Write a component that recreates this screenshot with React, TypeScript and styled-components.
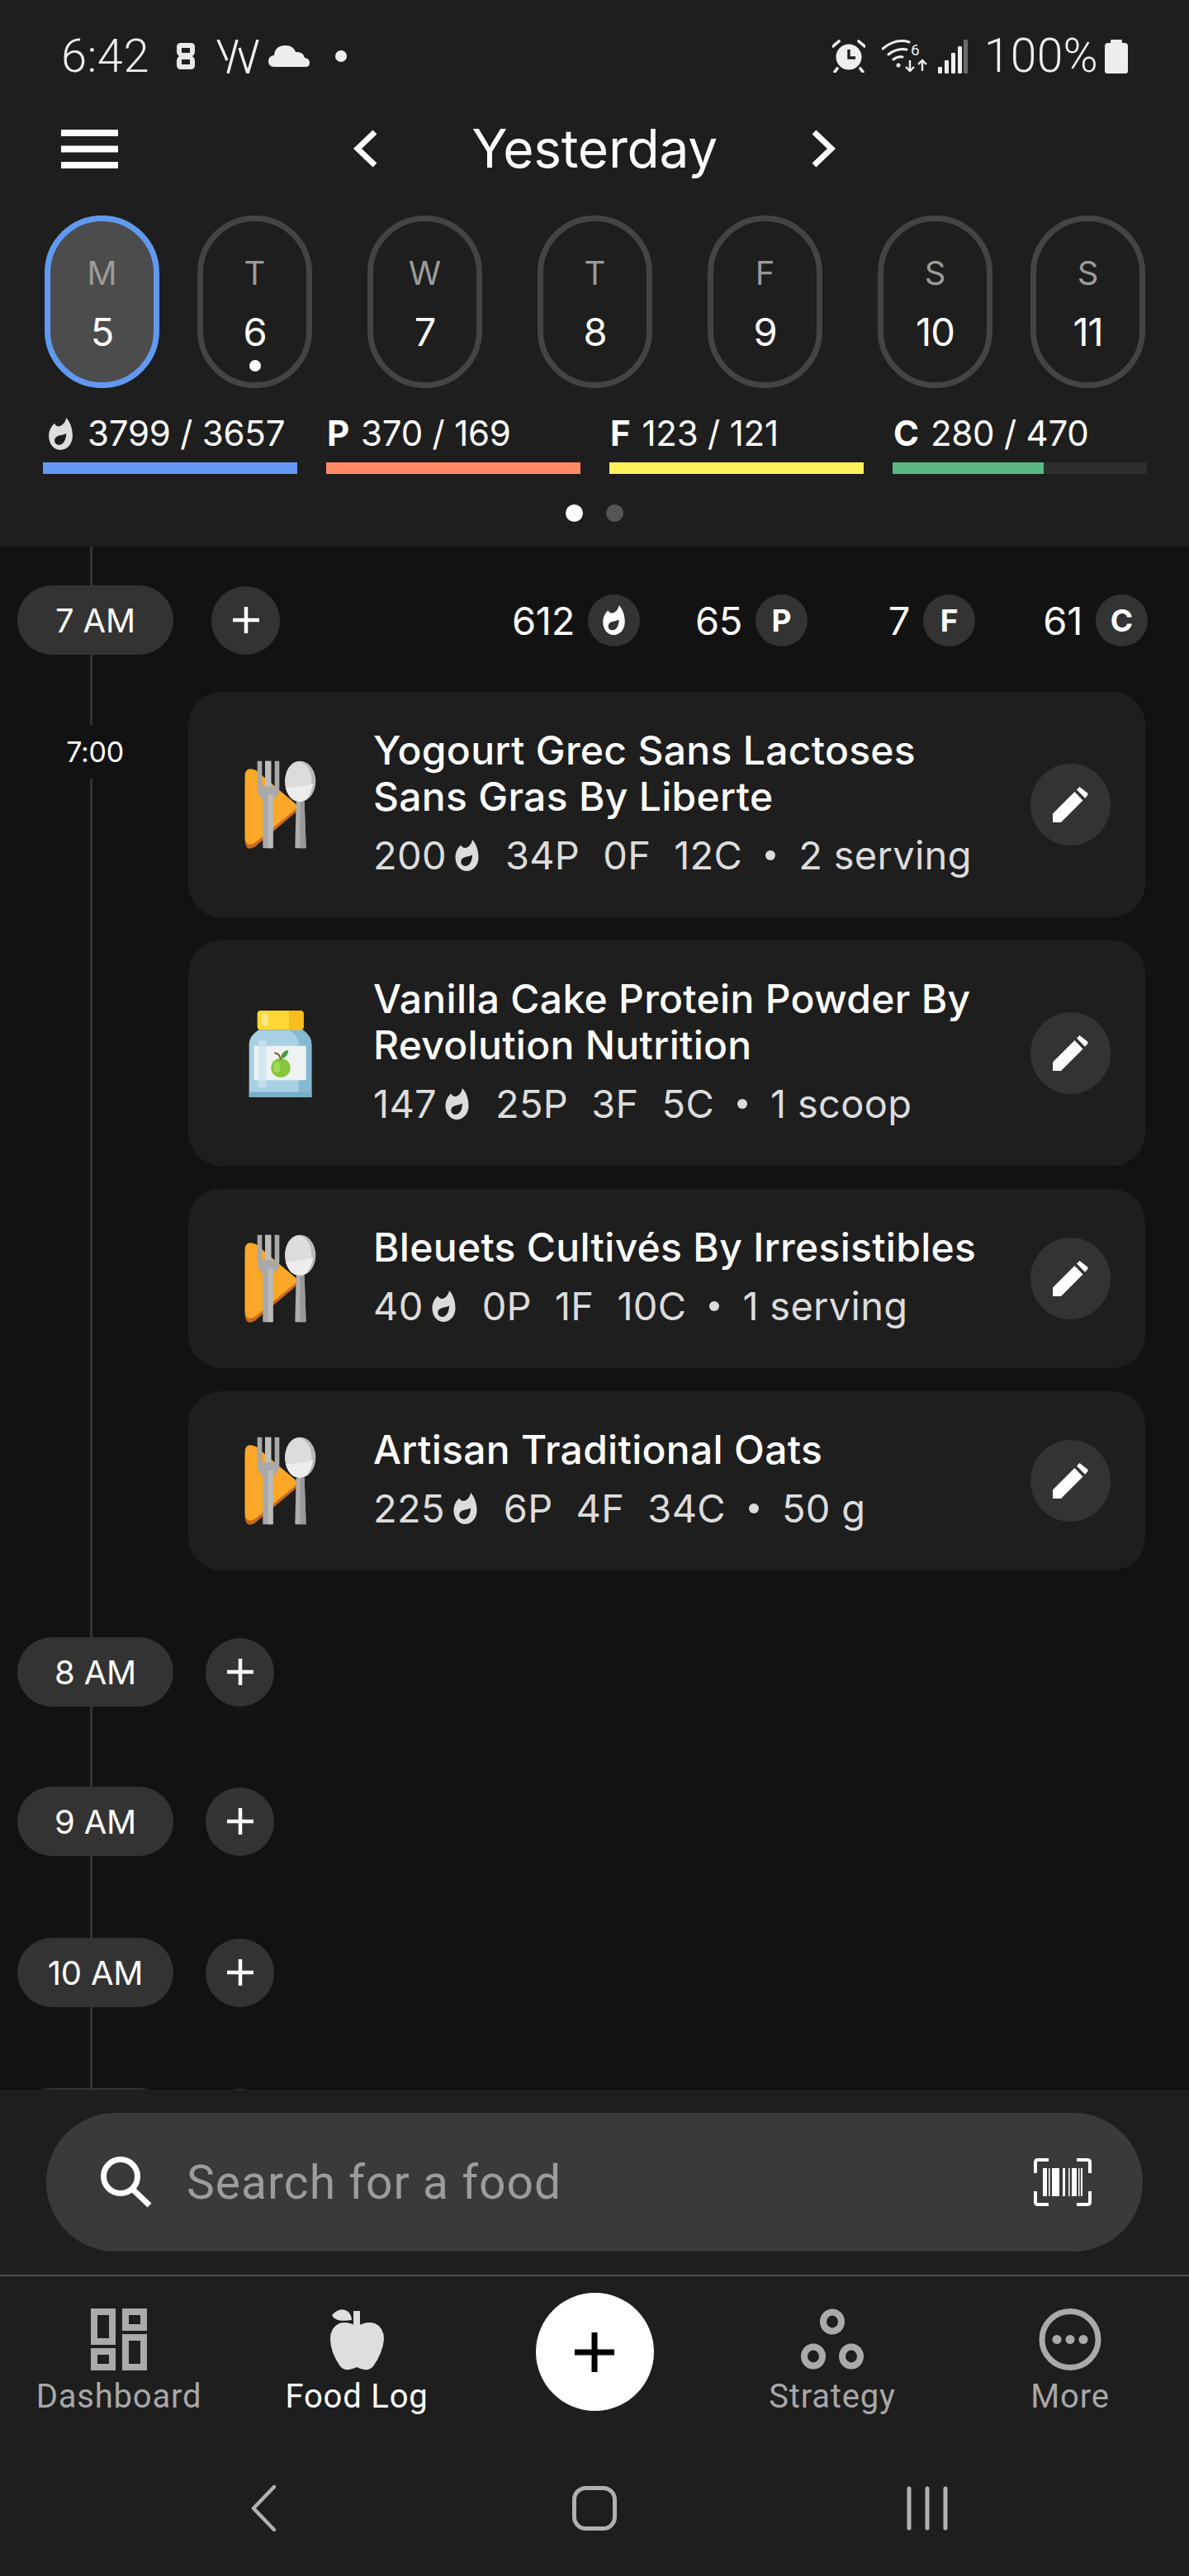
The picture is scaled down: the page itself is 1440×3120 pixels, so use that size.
import React from "react";
import styled, { createGlobalStyle } from "styled-components";

const Global = createGlobalStyle`
  html, body { margin: 0; padding: 0; background: #121212; }
  * { box-sizing: border-box; }
`;

const SANS = `"Inter", "Noto Sans", "Liberation Sans", sans-serif`;
const NAVFONT = `"Roboto", "Liberation Sans", sans-serif`;

const Page = styled.div`
  width: 1440px; height: 3120px; overflow: hidden; display: flex; flex-direction: column;
  background: #121212; color: #fff; font-family: ${SANS};
`;
const Header = styled.header`
  height: 662px; flex: none; background: #1e1e1e; display: flex; flex-direction: column;
`;
const StatusBar = styled.div`
  height: 136px; flex: none; display: flex; align-items: center; padding: 0 74px 0 74px; color: #eee;
`;
const StatusTime = styled.span`
  font: 300 56px/60px ${NAVFONT}; margin-right: 33px; letter-spacing: 0.5px;
`;
const StatusGlyph = styled.svg<{ $gap?: number }>`
  flex: none; display: block; margin-right: ${(p) => p.$gap ?? 0}px;
`;
const StatusSpacer = styled.div`flex: 1;`;
const StatusPercent = styled.span`
  font: 300 57px/60px ${NAVFONT}; margin: 0 8px 0 20px; letter-spacing: 0.3px;
`;
const NavRow = styled.div`
  height: 88px; flex: none; display: grid; grid-template-columns: 428px 584px 1fr; align-items: center;
`;
const MenuButton = styled.svg`display: block; margin-left: 74px;`;
const DateSwitcher = styled.div`
  display: flex; align-items: center; justify-content: space-between;
`;
const Chevron = styled.svg`display: block; flex: none;`;
const DateTitle = styled.span`
  font-size: 64px; line-height: 80px; font-weight: 400; letter-spacing: -0.3px;
`;
const DayRow = styled.div`
  margin-top: 37px; padding-left: 54px; display: flex; gap: 67px;
`;
const DayPill = styled.div<{ $active?: boolean }>`
  width: 139px; height: 209px; flex: none; border-radius: 70px; display: flex; flex-direction: column;
  align-items: center; padding-top: 41px;
  border: 7px solid ${(p) => (p.$active ? "#6199f0" : "#444444")};
  background: ${(p) => (p.$active ? "#4c4c4c" : "transparent")};
  &:first-child { margin-right: -21px; }
  &:last-child { margin-left: -21px; }
`;
const DayLetter = styled.span`
  font-size: 40px; line-height: 44px; color: #9b9b9b; font-weight: 400;
`;
const DayNumber = styled.span`
  margin-top: 24px; font-size: 47px; line-height: 50px; font-weight: 400; letter-spacing: -1px;
`;
const DayDot = styled.span`
  margin-top: 9px; width: 14px; height: 14px; border-radius: 50%; background: #fff; flex: none;
`;
const StatRow = styled.div`
  margin-top: 31px; padding-left: 52px; display: flex; gap: 35px;
`;
const Stat = styled.div`width: 308px; flex: none;`;
const StatText = styled.div`
  height: 48px; display: flex; align-items: center; font-size: 42px; line-height: 48px; letter-spacing: -0.2px;
  color: #fff; padding-left: 1px; white-space: nowrap;
`;
const StatKey = styled.b<{ $space: number }>`
  font-weight: 700; margin-right: ${(p) => p.$space}px;
`;
const StatFlame = styled.span`flex: none; display: block; margin: 0 18px 0 6px;`;
const Track = styled.div`
  margin-top: 11px; height: 14px; background: #2e2e2e;
`;
const Fill = styled.div<{ $color: string; $width: number }>`
  height: 100%; width: ${(p) => p.$width}%; background: ${(p) => p.$color};
`;
const Pager = styled.div`
  margin-top: 37px; display: flex; justify-content: center; gap: 28px;
`;
const PagerDot = styled.span<{ $on?: boolean }>`
  width: 21px; height: 21px; border-radius: 50%; background: ${(p) => (p.$on ? "#fff" : "#555")};
`;

const Timeline = styled.main`
  position: relative; flex: 1; min-height: 0; overflow: hidden; padding-top: 47px;
`;
const TimelineRail = styled.div`
  position: absolute; left: 109px; top: 0; bottom: 0; width: 3px; background: #333;
`;
const HourRow = styled.div<{ $after?: number }>`
  position: relative; display: flex; align-items: center; height: 84px; padding-left: 21px;
  margin-top: ${(p) => p.$after ?? 0}px;
`;
const HourPill = styled.div`
  width: 189px; height: 84px; border-radius: 42px; background: #333; display: flex; align-items: center;
  justify-content: center; font-size: 40px; letter-spacing: -0.2px;
`;
const AddHour = styled.div<{ $gap: number }>`
  width: 83px; height: 83px; border-radius: 50%; background: #333; display: flex; align-items: center;
  justify-content: center; margin-left: ${(p) => p.$gap}px;
`;
const MacroTotals = styled.div`
  margin-left: auto; padding-right: 50px; display: flex;
`;
const MacroTotal = styled.div`
  width: 203px; display: flex; align-items: center; justify-content: flex-end; gap: 16px;
  font-size: 47px; letter-spacing: -0.3px;
  &:last-child { width: 209px; }
`;
const MacroBadge = styled.span`
  width: 63px; height: 63px; border-radius: 50%; background: #333; display: flex; align-items: center;
  justify-content: center; font-size: 37px; font-weight: 700; letter-spacing: 0;
`;
const EntryGroup = styled.section`
  position: relative; display: flex; margin-top: 45px;
`;
const TimeColumn = styled.div`width: 228px; flex: none;`;
const TimeLabel = styled.div`
  margin: 40px 0 0 65px; width: 100px; height: 65px; background: #121212; display: flex;
  align-items: center; justify-content: center; font-size: 34px; letter-spacing: -0.3px;
`;
const CardStack = styled.div`
  width: 1159px; display: flex; flex-direction: column; gap: 28px;
`;
const Card = styled.article<{ $tall?: boolean }>`
  height: ${(p) => (p.$tall ? 273 : 217)}px; border-radius: 40px; background: #1e1e1e;
  display: flex; align-items: center; padding: 0 42px 0 32px;
`;
const FoodIcon = styled.svg`
  flex: none; display: block; margin: 8px 32px 0 0;
`;
const CardText = styled.div`flex: 1; min-width: 0; padding-bottom: 3px;`;
const FoodName = styled.div`
  font-size: 48px; line-height: 56px; font-weight: 500; letter-spacing: 0.3px; color: #fff; white-space: nowrap;
`;
const FoodMeta = styled.div`
  margin-top: 14px; display: flex; align-items: center; gap: 28px; font-size: 47px; line-height: 58px;
  color: #dcdcdc; letter-spacing: 0.3px; white-space: nowrap;
`;
const MetaCal = styled.span`display: flex; align-items: center; gap: 10px; margin-right: 4px;`;
const MetaDot = styled.span`
  width: 12px; height: 12px; border-radius: 50%; background: #dcdcdc;
`;
const EditButton = styled.button`
  flex: none; width: 97px; height: 99px; border-radius: 50%; border: 0; padding: 0; background: #333;
  display: flex; align-items: center; justify-content: center;
`;

const Footer = styled.footer`
  height: 589px; flex: none; background: #1e1e1e; display: flex; flex-direction: column;
  position: relative;
`;
const SearchBar = styled.div`
  margin: 28px 56px 0 56px; height: 168px; border-radius: 84px; background: #3a3a3a; display: flex;
  align-items: center; padding: 0 62px 0 66px;
`;
const SearchGlyph = styled.svg`flex: none; display: block;`;
const SearchPlaceholder = styled.span`
  flex: 1; margin-left: 42px; font-family: ${NAVFONT}; font-size: 57px; color: #9c9c9c; letter-spacing: 1px;
`;
const Divider = styled.div`margin-top: 28px; height: 2px; background: #4e4e4e; flex: none;`;
const TabBar = styled.nav`
  display: grid; grid-template-columns: repeat(5, 288px); height: 197px; flex: none;
`;
const Tab = styled.div`
  display: flex; flex-direction: column; align-items: center; padding-top: 39px;
`;
const TabGlyph = styled.svg`display: block; flex: none;`;
const TabLabel = styled.span<{ $active?: boolean }>`
  margin-top: 10px; font: 400 40px/44px ${NAVFONT}; letter-spacing: 0.8px;
  color: ${(p) => (p.$active ? "#fff" : "#a8a8a8")};
`;
const FabCell = styled.div`display: flex; justify-content: center; padding-top: 20px;`;
const Fab = styled.div`
  width: 143px; height: 143px; border-radius: 50%; background: #fff; display: flex; align-items: center;
  justify-content: center;
`;
const SystemNav = styled.div`
  margin-top: auto; height: 164px; flex: none; display: flex; align-items: center; padding-left: 304px;
`;
const SystemGlyph = styled.svg<{ $left?: number }>`
  display: block; flex: none; margin-left: ${(p) => p.$left ?? 0}px;
`;
const FlameGlyph = styled.svg`display: block; flex: none;`;
const PlusGlyph = styled.svg`display: block; flex: none;`;
const PencilGlyph = styled.svg`display: block; flex: none;`;

const Flame = ({ w, h, c }: { w: number; h: number; c: string }) => (
  <FlameGlyph width={w} height={h} viewBox="0 0 28 38">
    <path
      fillRule="evenodd"
      fill={c}
      d="M20.5 0C26 6 28 14 28 21.5C28 31 21.5 38 13.7 38C6 38 0 31 0 21.5C0 15 3 10 6.5 6.5C8 9 10 10.5 12.5 10C16.5 9 19.8 5 20.5 0ZM20.5 18.4C16 21 10 20 7.5 24C5.5 28 8 32 12 32C17 32 20.5 26 20.5 18.4Z"
    />
  </FlameGlyph>
);

const Plus = ({ size, stroke, color }: { size: number; stroke: number; color: string }) => (
  <PlusGlyph width={size} height={size} viewBox={`0 0 ${size} ${size}`}>
    <path d={`M${size / 2} 0V${size}M0 ${size / 2}H${size}`} stroke={color} strokeWidth={stroke} fill="none" />
  </PlusGlyph>
);

const Pencil = () => (
  <PencilGlyph width="43" height="43" viewBox="0 0 43 43">
    <path fill="#fff" d="M0 43V32.5L26.5 6L36.5 16.5L10 43Z" />
    <path fill="#fff" d="M29 3.5L32.5 0L42 7.5Q43 9 42 10.5L39 13.8Z" />
  </PencilGlyph>
);

const PlateIcon = () => (
  <FoodIcon width="160" height="160" viewBox="0 0 480 480">
    <path d="M110 130Q112 88 150 104L292 222Q306 238 288 252L146 372Q112 392 110 350Z" fill="#c9691d" transform="translate(0 8)" />
    <path d="M110 120Q112 86 150 102L292 222Q306 234 288 248L146 366Q112 382 110 346Z" fill="#fba727" />
    <path d="M155 68H172V160H183V68H205V160H218V68H235V165Q235 195 212 208V385H175V208Q155 195 155 165Z" fill="#a9a9a9" />
    <path d="M183 68H205V160H183ZM194 190H212V385H194Z" fill="#bdbdbd" />
    <path d="M296 215H326L332 385H292Z" fill="#adadad" />
    <path d="M311 215H326L332 385H311Z" fill="#989898" />
    <ellipse cx="311" cy="142" rx="56" ry="74" fill="#b9b9b9" />
    <ellipse cx="304" cy="142" rx="48" ry="72" fill="#dcdcdc" />
    <path d="M258 165Q310 165 358 150Q345 216 311 216Q270 216 258 165Z" fill="#ededed" />
  </FoodIcon>
);

const JarIcon = () => (
  <FoodIcon width="160" height="160" viewBox="0 0 480 480">
    <path d="M125 386V195Q125 165 160 142H320Q352 165 352 195V386Z" fill="#a8d0e3" />
    <path d="M270 142H320Q352 165 352 195V386H305V195Q305 165 270 142Z" fill="#85b9d2" />
    <rect x="125" y="368" width="227" height="18" fill="#79afc9" />
    <path d="M143 200H332V325H143Z" fill="#eef2f3" />
    <rect x="159" y="180" width="28" height="172" fill="#c8e3ee" opacity=".75" />
    <rect x="155" y="72" width="168" height="70" rx="12" fill="#fdd835" />
    <path d="M270 72H311Q323 72 323 84V130Q323 142 311 142H270Z" fill="#f9bd1d" />
    <rect x="170" y="84" width="24" height="42" fill="#ffe985" />
    <ellipse cx="240" cy="280" rx="35" ry="35" fill="#85c63c" />
    <ellipse cx="226" cy="278" rx="13" ry="20" fill="#a3d95a" />
    <path d="M217 226Q236 228 240 250" stroke="#8a5a2b" strokeWidth="6" fill="none" />
    <path d="M241 246Q240 220 268 216Q266 242 241 246Z" fill="#3f9a37" />
  </FoodIcon>
);

const days = [
  ["M", "5"], ["T", "6"], ["W", "7"], ["T", "8"], ["F", "9"], ["S", "10"], ["S", "11"],
];

const foods = [
  { name: ["Yogourt Grec Sans Lactoses", "Sans Gras By Liberte"], cal: "200", macros: ["34P", "0F", "12C"], qty: "2 serving", jar: false },
  { name: ["Vanilla Cake Protein Powder By", "Revolution Nutrition"], cal: "147", macros: ["25P", "3F", "5C"], qty: "1 scoop", jar: true },
  { name: ["Bleuets Cultivés By Irresistibles"], cal: "40", macros: ["0P", "1F", "10C"], qty: "1 serving", jar: false },
  { name: ["Artisan Traditional Oats"], cal: "225", macros: ["6P", "4F", "34C"], qty: "50 g", jar: false },
];

const laterHours: Array<[string, number]> = [["8 AM", 81], ["9 AM", 97], ["10 AM", 99], ["", 98]];

export default function App() {
  return (
    <Page>
      <Global />
      <Header>
        <StatusBar>
          <StatusTime>6:42</StatusTime>
          <StatusGlyph $gap={26} width="22" height="32" viewBox="0 0 22 32">
            <path fillRule="evenodd" fill="#e8e8e8" d="M5 0H17Q22 0 22 5V11Q22 14 19 16Q22 18 22 21V27Q22 32 17 32H5Q0 32 0 27V21Q0 18 3 16Q0 14 0 11V5Q0 0 5 0ZM6 6V12H16V6ZM6 20V26H16V20Z" />
          </StatusGlyph>
          <StatusGlyph $gap={11} width="52" height="41" viewBox="0 0 52 41" fill="none" stroke="#eee" strokeWidth="3.4">
            <path d="M2 0L13 25M25 0L14 41M28 10L38 41L50 0" />
          </StatusGlyph>
          <StatusGlyph $gap={31} width="50" height="26" viewBox="0 0 50 26">
            <path fill="#eee" d="M7 26Q0 26 0 19Q0 13 7 12Q8 0 21 0Q30 0 33 8Q42 7 44 15Q50 16 50 21Q50 26 45 26Z" />
          </StatusGlyph>
          <StatusGlyph width="14" height="14" viewBox="0 0 14 14">
            <circle cx="7" cy="7" r="7" fill="#eee" />
          </StatusGlyph>
          <StatusSpacer />
          <StatusGlyph $gap={20} width="40" height="40" viewBox="0 0 40 40" fill="none">
            <circle cx="20" cy="21" r="15.5" fill="#eee" />
            <path d="M20 12V22H28" stroke="#1e1e1e" strokeWidth="3.4" />
            <path d="M1 8L8 2M39 8L32 2M6 35L3 39M34 35L37 39" stroke="#eee" strokeWidth="3.6" strokeLinecap="round" />
          </StatusGlyph>
          <StatusGlyph $gap={13} width="55" height="40" viewBox="0 0 55 40" fill="none" stroke="#eee">
            <path d="M1 11Q17 -2 33 3M8 18Q18 10 30 12M14 24Q19 20 25 21" strokeWidth="3" strokeLinecap="round" />
            <circle cx="20" cy="31" r="2.5" fill="#eee" stroke="none" />
            <path d="M34 25V38M29 33L34 38L39 33M49 38V25M44 30L49 25L54 30" strokeWidth="2.4" />
            <text x="35" y="19" fill="#eee" stroke="none" fontSize="19" fontFamily="Roboto, sans-serif">6</text>
          </StatusGlyph>
          <StatusGlyph width="36" height="41" viewBox="0 0 36 41">
            <rect x="0" y="33" width="5" height="8" rx="1" fill="#eee" />
            <rect x="8" y="25" width="5" height="16" rx="1" fill="#eee" />
            <rect x="16" y="16" width="5" height="25" rx="1" fill="#eee" />
            <rect x="24" y="8" width="5" height="33" rx="1" fill="#eee" />
            <rect x="31" y="0" width="5" height="41" rx="1" fill="#6a6a6a" />
          </StatusGlyph>
          <StatusPercent>100%</StatusPercent>
          <StatusGlyph width="28" height="41" viewBox="0 0 28 41">
            <path fill="#eee" d="M8 0H20Q21 0 21 2V4H24Q28 4 28 8V38Q28 41 25 41H3Q0 41 0 38V8Q0 4 4 4H7V2Q7 0 8 0Z" />
          </StatusGlyph>
        </StatusBar>
        <NavRow>
          <MenuButton width="69" height="47" viewBox="0 0 69 47">
            <rect width="69" height="8" y="0" fill="#fff" />
            <rect width="69" height="8" y="19.5" fill="#fff" />
            <rect width="69" height="8" y="39" fill="#fff" />
          </MenuButton>
          <DateSwitcher>
            <Chevron width="29" height="46" viewBox="0 0 29 46" fill="none"><path d="M26 3L5 23L26 43" stroke="#fff" strokeWidth="7" /></Chevron>
            <DateTitle>Yesterday</DateTitle>
            <Chevron width="29" height="46" viewBox="0 0 29 46" fill="none"><path d="M3 3L24 23L3 43" stroke="#fff" strokeWidth="7" /></Chevron>
          </DateSwitcher>
        </NavRow>
        <DayRow>
          {days.map(([letter, number], i) => (
            <DayPill key={i} $active={i === 0}>
              <DayLetter>{letter}</DayLetter>
              <DayNumber>{number}</DayNumber>
              {i === 1 && <DayDot />}
            </DayPill>
          ))}
        </DayRow>
        <StatRow>
          <Stat>
            <StatText>
              <StatFlame><Flame w={29} h={39} c="#dedede" /></StatFlame>
              3799 / 3657
            </StatText>
            <Track><Fill $color="#6699f3" $width={100} /></Track>
          </Stat>
          <Stat>
            <StatText><StatKey $space={14}>P</StatKey>370 / 169</StatText>
            <Track><Fill $color="#ff8a65" $width={100} /></Track>
          </Stat>
          <Stat>
            <StatText><StatKey $space={14}>F</StatKey>123 / 121</StatText>
            <Track><Fill $color="#fff05c" $width={100} /></Track>
          </Stat>
          <Stat>
            <StatText><StatKey $space={14}>C</StatKey>280 / 470</StatText>
            <Track><Fill $color="#5bb884" $width={59.5} /></Track>
          </Stat>
        </StatRow>
        <Pager>
          <PagerDot $on />
          <PagerDot />
        </Pager>
      </Header>

      <Timeline>
        <TimelineRail />
        <HourRow>
          <HourPill>7 AM</HourPill>
          <AddHour $gap={46}><Plus size={32} stroke={4.5} color="#fff" /></AddHour>
          <MacroTotals>
            <MacroTotal>612<MacroBadge><Flame w={27} h={36} c="#fff" /></MacroBadge></MacroTotal>
            <MacroTotal>65<MacroBadge>P</MacroBadge></MacroTotal>
            <MacroTotal>7<MacroBadge>F</MacroBadge></MacroTotal>
            <MacroTotal>61<MacroBadge>C</MacroBadge></MacroTotal>
          </MacroTotals>
        </HourRow>
        <EntryGroup>
          <TimeColumn><TimeLabel>7:00</TimeLabel></TimeColumn>
          <CardStack>
            {foods.map((f) => (
              <Card key={f.name[0]} $tall={f.name.length > 1}>
                {f.jar ? <JarIcon /> : <PlateIcon />}
                <CardText>
                  {f.name.map((line) => <FoodName key={line}>{line}</FoodName>)}
                  <FoodMeta>
                    <MetaCal>{f.cal}<Flame w={29} h={38} c="#dcdcdc" /></MetaCal>
                    {f.macros.map((m) => <span key={m}>{m}</span>)}
                    <MetaDot />
                    <span>{f.qty}</span>
                  </FoodMeta>
                </CardText>
                <EditButton aria-label="Edit"><Pencil /></EditButton>
              </Card>
            ))}
          </CardStack>
        </EntryGroup>
        {laterHours.map(([label, after]) => (
          <HourRow key={after + label} $after={after}>
            <HourPill>{label}</HourPill>
            <AddHour $gap={39}><Plus size={32} stroke={4.5} color="#fff" /></AddHour>
          </HourRow>
        ))}
      </Timeline>

      <Footer>
        <SearchBar>
          <SearchGlyph width="62" height="62" viewBox="0 0 62 62" fill="none" stroke="#fff">
            <circle cx="24" cy="24" r="20.5" strokeWidth="7" />
            <path d="M38 39L59 59" strokeWidth="7" />
          </SearchGlyph>
          <SearchPlaceholder>Search for a food</SearchPlaceholder>
          <SearchGlyph width="70" height="58" viewBox="0 0 70 58" fill="none" stroke="#fff" strokeWidth="4">
            <path d="M18 2H5Q2 2 2 5V18M52 2H65Q68 2 68 5V18M18 56H5Q2 56 2 53V40M52 56H65Q68 56 68 53V40" />
            <path fill="#fff" stroke="none" d="M11 12H16V46H11ZM18 12H19.5V46H18ZM22 12H31V46H22ZM35 12H38V46H35ZM42 12H43.5V46H42ZM46 12H52V46H46ZM54 12H55.5V46H54ZM57 12H59V46H57Z" />
          </SearchGlyph>
        </SearchBar>
        <Divider />
        <TabBar>
          <Tab>
            <TabGlyph width="68" height="75" viewBox="0 0 68 75" fill="none" stroke="#aaa" strokeWidth="8">
              <rect x="4" y="4" width="22" height="36" />
              <rect x="42" y="4" width="22" height="19" />
              <rect x="4" y="52" width="22" height="19" />
              <rect x="42" y="35" width="22" height="36" />
            </TabGlyph>
            <TabLabel>Dashboard</TabLabel>
          </Tab>
          <Tab>
            <TabGlyph width="65" height="75" viewBox="0 0 65 75">
              <path fill="#dedede" d="M2 8Q10 -1 18 2Q25 4 26 14Q12 16 7 13Q3 11 2 8Z" />
              <rect x="28" y="3" width="8" height="20" fill="#dedede" />
              <path fill="#dedede" d="M32 22Q43 15 54 18Q65 23 65 37Q64 53 52 70Q48 75 41 74Q36 73 32 71Q28 73 23 74Q16 75 12 70Q0 53 0 37Q0 23 11 18Q22 15 32 22Z" />
            </TabGlyph>
            <TabLabel $active>Food Log</TabLabel>
          </Tab>
          <FabCell>
            <Fab><Plus size={48} stroke={7} color="#000" /></Fab>
          </FabCell>
          <Tab>
            <TabGlyph width="76" height="75" viewBox="0 0 76 75" fill="none" stroke="#aaa" strokeWidth="8">
              <ellipse cx="38" cy="16" rx="11" ry="11.5" />
              <ellipse cx="15" cy="58" rx="11" ry="11.5" />
              <ellipse cx="61" cy="58" rx="11" ry="11.5" />
            </TabGlyph>
            <TabLabel>Strategy</TabLabel>
          </Tab>
          <Tab>
            <TabGlyph width="76" height="75" viewBox="0 0 76 75" fill="none">
              <circle cx="38" cy="37.5" r="34" stroke="#aaa" strokeWidth="7" />
              <circle cx="22" cy="37.5" r="5.5" fill="#aaa" />
              <circle cx="38" cy="37.5" r="5.5" fill="#aaa" />
              <circle cx="54" cy="37.5" r="5.5" fill="#aaa" />
            </TabGlyph>
            <TabLabel>More</TabLabel>
          </Tab>
        </TabBar>
        <SystemNav>
          <SystemGlyph width="30" height="56" viewBox="0 0 30 56" fill="none">
            <path d="M28 2L3 28L28 54" stroke="#b0b0b0" strokeWidth="4.5" strokeLinecap="round" strokeLinejoin="round" />
          </SystemGlyph>
          <SystemGlyph $left={359} width="54" height="54" viewBox="0 0 54 54" fill="none">
            <rect x="2.5" y="2.5" width="49" height="49" rx="14" stroke="#b0b0b0" strokeWidth="5" />
          </SystemGlyph>
          <SystemGlyph $left={351} width="50" height="54" viewBox="0 0 50 54" fill="none">
            <path d="M3 3V51M25 3V51M47 3V51" stroke="#b0b0b0" strokeWidth="5" strokeLinecap="round" />
          </SystemGlyph>
        </SystemNav>
      </Footer>
    </Page>
  );
}
